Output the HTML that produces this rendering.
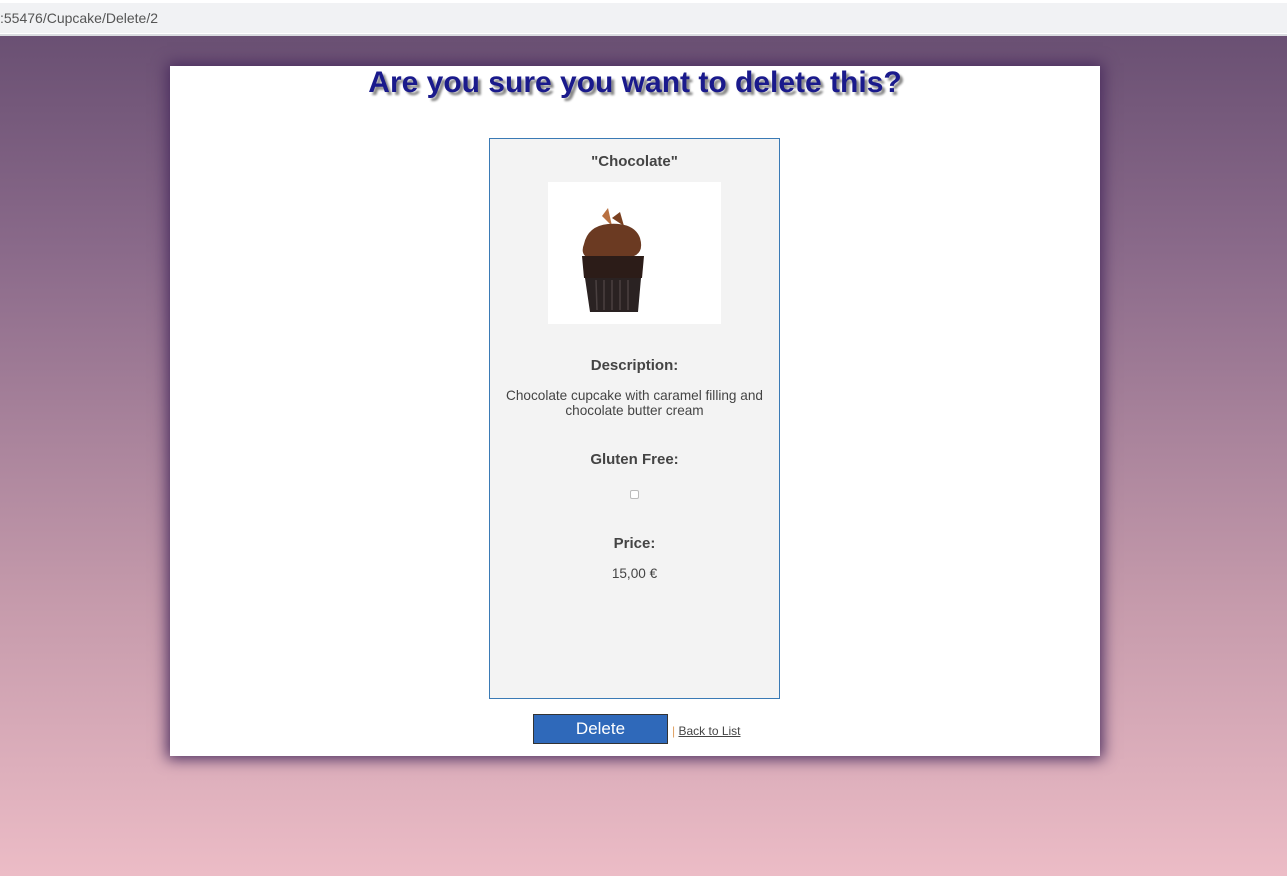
<!DOCTYPE html>
<html><head><meta charset="utf-8"><style>
*{margin:0;padding:0;box-sizing:border-box}
body{width:1287px;height:876px;overflow:hidden;font-family:"Liberation Sans",Arial,sans-serif;background:linear-gradient(#6a5073 36px,#8a6a8a 250px,#c59aab 600px,#ecbcc6 876px);position:relative}
.bar{position:absolute;left:0;top:0;width:1287px;height:36px;background:#fff}
.url{position:absolute;left:0;top:3px;width:1287px;height:30px;background:#f1f2f4;font-size:14px;color:#555;line-height:30px;padding-left:0}
.line{position:absolute;left:0;top:34px;width:1287px;height:2px;background:#dadce0}
.card{position:absolute;left:170px;top:66px;width:930px;height:690px;background:#fff;box-shadow:0 0 14px 3px #4a2d5e}
h1{position:absolute;left:0;width:930px;top:0;text-align:center;font-size:30px;font-weight:bold;color:#1a1a8c;text-shadow:3px 3px 2px #888}
.box{position:absolute;left:319px;top:72px;width:291px;height:561px;background:#f3f3f3;border:1px solid #3a7ab5;text-align:center;color:#444}
.t{position:absolute;left:0;width:100%;font-size:15px;font-weight:bold}
.d{position:absolute;left:0;width:100%;font-size:13.6px}
.img{position:absolute;left:58px;top:43px;width:173px;height:142px;background:#fff}
.cb{position:absolute;left:140px;top:351px;width:9px;height:9px;border:1px solid #bbb;border-radius:2px;background:#fff}
.btn{position:absolute;left:363px;top:648px;width:135px;height:30px;background:#2f69ba;border:1px solid #333;color:#fff;font-size:17px;text-align:center;line-height:28px}
.lnk{position:absolute;left:502px;top:658px;font-size:12px;color:#333}
.lnk span{color:#e0a060}
.lnk u{color:#444}
</style></head><body>
<div class="bar"></div><div class="url">:55476/Cupcake/Delete/2</div><div class="line"></div>
<div class="card">
<h1>Are you sure you want to delete this?</h1>
<div class="box">
<div class="t" style="top:14px">"Chocolate"</div>
<div class="img"><svg width="173" height="142" viewBox="0 0 173 142">
<path d="M54 34 L60 26 L64 44 Z" fill="#b87040"/><path d="M64 36 L72 30 L76 44 Z" fill="#7a4020"/>
<path d="M36 62 Q40 44 60 42 Q86 40 92 56 Q96 70 86 74 L40 76 Q32 72 36 62Z" fill="#6b3a22"/>
<path d="M34 74 L96 74 L94 96 L36 96Z" fill="#2c1c18"/>
<path d="M37 96 L93 96 L90 130 L42 130Z" fill="#2a2222"/>
<g stroke="#4a4040" stroke-width="1.5"><line x1="48" y1="98" x2="49" y2="128"/><line x1="56" y1="98" x2="56" y2="128"/><line x1="64" y1="98" x2="64" y2="128"/><line x1="72" y1="98" x2="72" y2="128"/><line x1="80" y1="98" x2="80" y2="128"/></g>
</svg></div>
<div class="t" style="top:218px">Description:</div>
<div class="d" style="top:249px;line-height:15px">Chocolate cupcake with caramel filling and<br>chocolate butter cream</div>
<div class="t" style="top:312px">Gluten Free:</div>
<div class="cb"></div>
<div class="t" style="top:396px">Price:</div>
<div class="d" style="top:427px">15,00 €</div>
</div>
<div class="btn">Delete</div>
<div class="lnk"><span>|</span> <u>Back to List</u></div>
</div>
</body></html>
